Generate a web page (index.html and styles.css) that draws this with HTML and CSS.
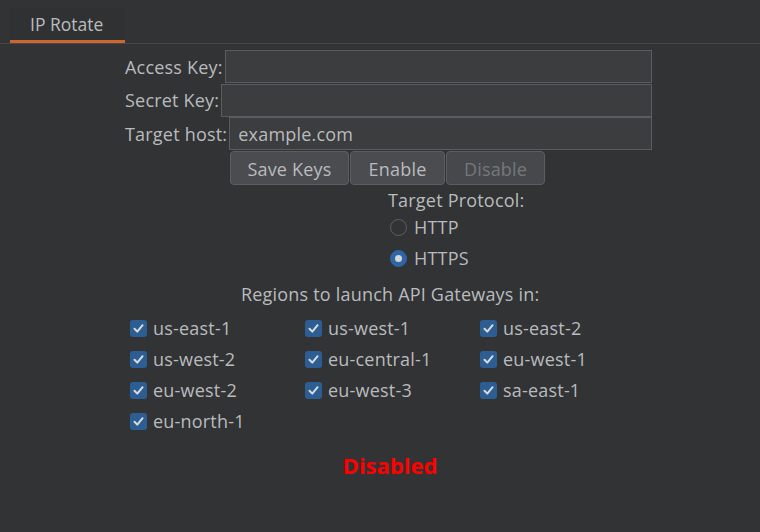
FILE: index.html
```html
<!DOCTYPE html>
<html>
<head>
<meta charset="utf-8">
<link rel="stylesheet" href="styles.css">
</head>
<body>
<div class="tabbar"><div class="tab">IP Rotate</div></div>
<div class="panel">
  <div class="form">
    <div class="row"><span class="label">Access Key:</span><input class="field" type="text" value=""></div>
    <div class="row"><span class="label">Secret Key:</span><input class="field" type="text" value=""></div>
    <div class="row"><span class="label">Target host:</span><input class="field" type="text" value="example.com"></div>
  </div>
  <div class="buttons">
    <button class="btn btn-save">Save Keys</button>
    <button class="btn btn-enable">Enable</button>
    <button class="btn btn-disable" disabled>Disable</button>
  </div>
  <div class="protocol">
    <div class="proto-title">Target Protocol:</div>
    <div class="radio-row"><span class="radio"></span><span>HTTP</span></div>
    <div class="radio-row"><span class="radio checked"></span><span>HTTPS</span></div>
  </div>
  <div class="regions-title">Regions to launch API Gateways in:</div>
  <div class="regions">
    <div class="check"><span class="box"><svg viewBox="0 0 17 17"><path d="M4.5 8.8 L7.3 11.6 L12.6 5.2"/></svg></span>us-east-1</div>
    <div class="check"><span class="box"><svg viewBox="0 0 17 17"><path d="M4.5 8.8 L7.3 11.6 L12.6 5.2"/></svg></span>us-west-1</div>
    <div class="check"><span class="box"><svg viewBox="0 0 17 17"><path d="M4.5 8.8 L7.3 11.6 L12.6 5.2"/></svg></span>us-east-2</div>
    <div class="check"><span class="box"><svg viewBox="0 0 17 17"><path d="M4.5 8.8 L7.3 11.6 L12.6 5.2"/></svg></span>us-west-2</div>
    <div class="check"><span class="box"><svg viewBox="0 0 17 17"><path d="M4.5 8.8 L7.3 11.6 L12.6 5.2"/></svg></span>eu-central-1</div>
    <div class="check"><span class="box"><svg viewBox="0 0 17 17"><path d="M4.5 8.8 L7.3 11.6 L12.6 5.2"/></svg></span>eu-west-1</div>
    <div class="check"><span class="box"><svg viewBox="0 0 17 17"><path d="M4.5 8.8 L7.3 11.6 L12.6 5.2"/></svg></span>eu-west-2</div>
    <div class="check"><span class="box"><svg viewBox="0 0 17 17"><path d="M4.5 8.8 L7.3 11.6 L12.6 5.2"/></svg></span>eu-west-3</div>
    <div class="check"><span class="box"><svg viewBox="0 0 17 17"><path d="M4.5 8.8 L7.3 11.6 L12.6 5.2"/></svg></span>sa-east-1</div>
    <div class="check"><span class="box"><svg viewBox="0 0 17 17"><path d="M4.5 8.8 L7.3 11.6 L12.6 5.2"/></svg></span>eu-north-1</div>
  </div>
  <div class="status">Disabled</div>
</div>
</body>
</html>
```

FILE: styles.css
```css
* { box-sizing: border-box; }
html, body {
  margin: 0;
  height: 100%;
  background: #313335;
}
body {
  font-family: "Open Sans", "Noto Sans", sans-serif;
  font-size: 18px;
  letter-spacing: 0.2px;
  color: #b9bbbe;
}
.tabbar {
  height: 44px;
  border-bottom: 1px solid #46484b;
  padding-left: 10px;
  display: flex;
  align-items: flex-end;
}
.tab {
  width: 115px;
  height: 35px;
  padding: 0 0 0 20px;
  background: #2f3133;
  border-bottom: 3px solid #d0652e;
  font-size: 17.5px;
  letter-spacing: 0;
  line-height: 33px;
  color: #b9bcbf;
}
.panel {
  display: flex;
  flex-direction: column;
}
.form {
  margin: 6px 0 0 125px;
  width: 527px;
  display: flex;
  flex-direction: column;
}
.row {
  display: flex;
  align-items: center;
  gap: 2px;
  height: 33.5px;
}
.label { white-space: nowrap; }
.field {
  flex: 1;
  height: 33px;
  margin: 0;
  background: #3c3d3f;
  border: 1px solid #5a5c5f;
  color: #b9bbbe;
  font: inherit;
  letter-spacing: inherit;
  padding: 0 8px;
  outline: none;
}
.buttons {
  margin: 0 0 0 230px;
  display: flex;
  gap: 1px;
}
.btn {
  height: 34px;
  margin: 0;
  padding: 2px 0 0;
  font: inherit;
  letter-spacing: inherit;
  color: #b9bbbe;
  background: #4a4c4f;
  border: 1px solid #5b5e61;
  border-radius: 4px;
}
.btn-save { width: 119px; }
.btn-enable { width: 95px; }
.btn-disable { width: 99px; color: #75787b; background: #46484b; }
.protocol {
  margin: 4px 0 0 388px;
}
.proto-title {
  line-height: 22px;
  margin-bottom: 1px;
}
.radio-row {
  display: flex;
  align-items: center;
  gap: 7px;
  height: 31px;
  padding-left: 2px;
}
.radio {
  width: 17px;
  height: 17px;
  border-radius: 50%;
  border: 1.5px solid #5e6062;
  display: flex;
  align-items: center;
  justify-content: center;
}
.radio.checked {
  background: #2f65a6;
  border-color: #2f65a6;
}
.radio.checked::after {
  content: "";
  width: 7px;
  height: 7px;
  border-radius: 50%;
  background: #d4d6d8;
}
.regions-title {
  margin: 9px 0 0 241px;
  line-height: 22px;
}
.regions {
  margin: 8px 0 0 130px;
  display: grid;
  grid-template-columns: 175px 175px 175px;
  grid-auto-rows: 31px;
}
.check {
  display: flex;
  align-items: center;
  gap: 6px;
}
.box {
  width: 17px;
  height: 17px;
  border-radius: 3px;
  background: #2c5e94;
  display: block;
}
.box svg {
  width: 17px;
  height: 17px;
  display: block;
  fill: none;
  stroke: #d9dbdd;
  stroke-width: 2;
  stroke-linecap: round;
  stroke-linejoin: round;
}
.status {
  margin: 14px 0 0 0;
  width: 780px;
  text-align: center;
  font-weight: bold;
  font-size: 22px;
  letter-spacing: 0;
  line-height: 28px;
  color: #ff0000;
}
```
